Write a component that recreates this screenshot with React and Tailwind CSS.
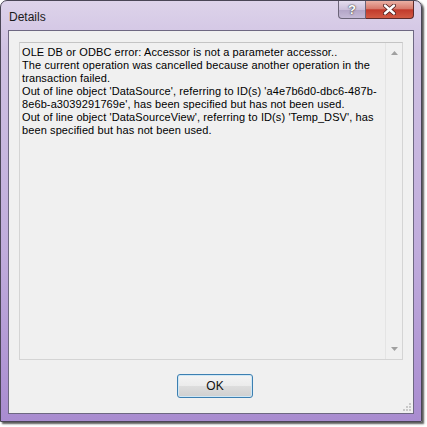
import React from "react";

const lines = [
  "OLE DB or ODBC error: Accessor is not a parameter accessor..",
  "The current operation was cancelled because another operation in the",
  "transaction failed.",
  "Out of line object 'DataSource', referring to ID(s) 'a4e7b6d0-dbc6-487b-",
  "8e6b-a3039291769e', has been specified but has not been used.",
  "Out of line object 'DataSourceView', referring to ID(s) 'Temp_DSV', has",
  "been specified but has not been used.",
];

export default function App() {
  return (
    <div className="w-[427px] h-[427px] bg-white overflow-hidden" style={{ fontFamily: '"Liberation Sans", Arial, sans-serif' }}>
      <div className="w-[422px] h-[422px] flex flex-col border border-[#4a4656] rounded-t-[7px] bg-[linear-gradient(180deg,#ddd3ea_0%,#cfc1e2_12%,#c0acdc_60%,#a98cd0_100%)] shadow-[2px_2px_2px_rgba(0,0,0,0.65)]">
        {/* Title bar */}
        <div className="h-[29px] flex items-start justify-between shrink-0">
          <div className="pl-[8px] pt-[9px] text-[12px] leading-[14px] text-[#1a1a1a]">Details</div>
          <div className="flex mr-[7px]">
            <div className="w-[28px] h-[18px] border border-[#6b6478] border-t-0 rounded-bl-[4px] bg-[linear-gradient(180deg,#e4ddee_0%,#cbbfda_50%,#b2a4c6_51%,#c5b9d6_100%)] flex items-center justify-center">
              <span className="text-white font-bold text-[13px] leading-none" style={{ textShadow: "0 0 1px #333, 0 0 2px #444" }}>?</span>
            </div>
            <div className="w-[48px] h-[18px] border border-[#5e2a2a] border-t-0 border-l-0 rounded-br-[4px] bg-[linear-gradient(180deg,#eab0a4_0%,#d77a6c_45%,#c23a2c_52%,#d25a44_100%)] flex items-center justify-center">
              <svg width="13" height="11" viewBox="0 0 13 11">
                <path d="M2 1.5 L11 9.5 M11 1.5 L2 9.5" stroke="#4a1a1a" strokeWidth="4" strokeLinecap="round" />
                <path d="M2 1.5 L11 9.5 M11 1.5 L2 9.5" stroke="#ffffff" strokeWidth="2.4" strokeLinecap="round" />
              </svg>
            </div>
          </div>
        </div>
        {/* Content */}
        <div className="flex-1 mx-[7px] mb-[7px] border border-[#6e6882] bg-[#f0f0f0] flex flex-col px-[10px] pt-[11px] relative">
          <div className="h-[318px] border border-[#d4d4d4] border-t-[#c4c4c4] bg-[#f0f0f0] flex">
            <div className="flex-1 pl-[2px] pt-[3px] text-[11px] leading-[13px] tracking-[0.1px] text-[#000] whitespace-nowrap">
              {lines.map((l, i) => (
                <div key={i}>{l}</div>
              ))}
            </div>
            <div className="w-[17px] border-l border-[#e4e4e4] flex flex-col items-center justify-between py-[8px]">
              <svg width="7" height="4" viewBox="0 0 7 4"><path d="M0 4 L3.5 0 L7 4 Z" fill="#a0a0a0" /></svg>
              <svg width="7" height="4" viewBox="0 0 7 4"><path d="M0 0 L3.5 4 L7 0 Z" fill="#a0a0a0" /></svg>
            </div>
          </div>
          <button className="mt-[14px] self-center ml-[8px] w-[76px] h-[24px] rounded-[3px] border border-[#3c7fb1] bg-[linear-gradient(180deg,#f4f4f4_0%,#ebebeb_50%,#dddddd_51%,#cfcfcf_100%)] shadow-[inset_0_0_0_1px_#cfe7f5] text-[12px] text-[#111] flex items-center justify-center">
            OK
          </button>
          <div className="absolute right-[2px] bottom-[2px] grid grid-cols-3 gap-[1px]">
            <span className="w-[2px] h-[2px]" />
            <span className="w-[2px] h-[2px]" />
            <span className="w-[2px] h-[2px] bg-[#c8c8c8]" />
            <span className="w-[2px] h-[2px]" />
            <span className="w-[2px] h-[2px] bg-[#c8c8c8]" />
            <span className="w-[2px] h-[2px] bg-[#c8c8c8]" />
            <span className="w-[2px] h-[2px] bg-[#c8c8c8]" />
            <span className="w-[2px] h-[2px] bg-[#c8c8c8]" />
            <span className="w-[2px] h-[2px] bg-[#c8c8c8]" />
          </div>
        </div>
      </div>
    </div>
  );
}
